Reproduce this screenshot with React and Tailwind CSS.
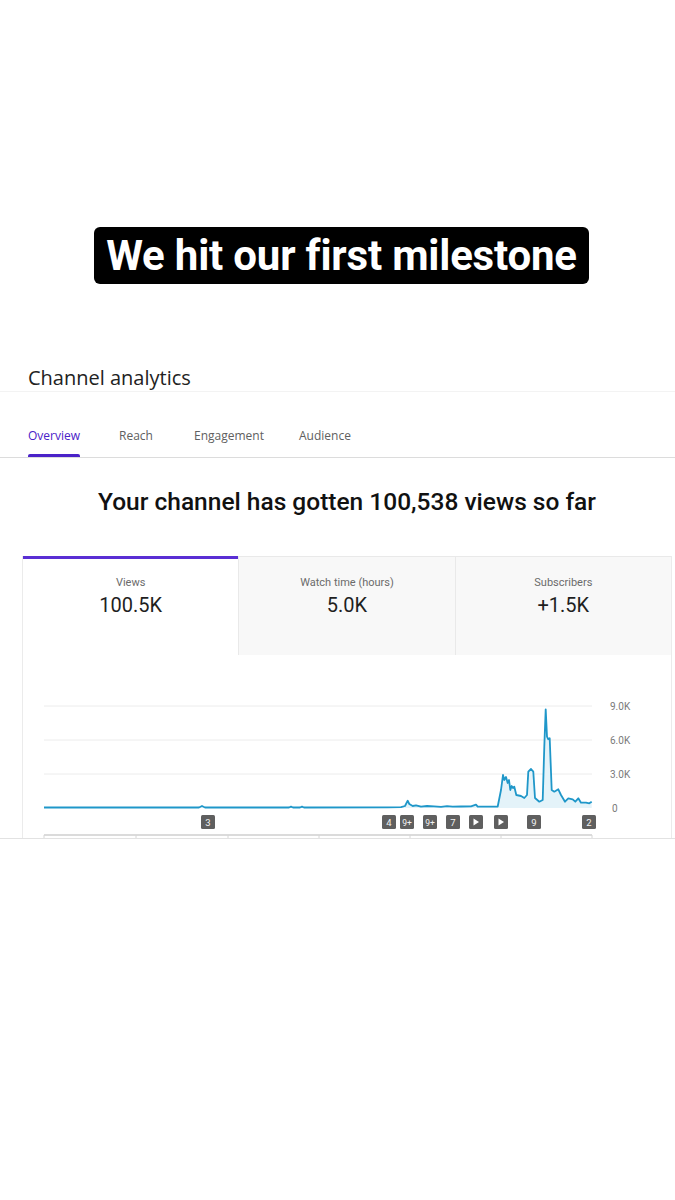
import React from "react";

const linePts = [
  [43, 807.5], [198, 807.5], [201, 806], [204, 807.5], [288, 807.5], [290, 806.6], [292, 807.5], [299, 807.5], [301, 806.6], [303, 807.5],
  [386.7, 807.3], [400, 807.2], [404, 806], [406.7, 800.7], [408.3, 804], [411.7, 806], [415, 805.3], [420, 806.7],
  [426, 806], [433, 806.3], [440, 806.8], [446, 806.2], [451.7, 806.7], [460, 806.5], [470, 806.4], [475, 804.7], [476.7, 806.7],
  [490, 806.7], [496.7, 806.5], [500, 790], [502, 775], [503.3, 780], [505, 777], [506.7, 783], [508, 780], [509.3, 790],
  [510.7, 786], [512, 788], [513.3, 786.7], [515.3, 795], [520, 796], [523.3, 798], [526, 795], [527.3, 771.7], [530, 769],
  [532.3, 771.7], [534, 798], [538.3, 801.7], [541.7, 800], [543.3, 746.7], [544.7, 709.3], [546, 736.7], [547.3, 739.3],
  [548.7, 738.3], [550.7, 790], [553.3, 791.7], [557.3, 789.3], [560, 795], [564, 801.7], [567.3, 798.3], [571.7, 799.3],
  [574.3, 801.7], [577.3, 798.3], [580, 802.7], [585, 802.7], [588.3, 803.3], [590.7, 801.7],
];

const lineD = linePts.map((p, i) => (i ? "L" : "M") + p[0] + " " + p[1]).join(" ");
const fillD = lineD + " L590.7 808 L43 808 Z";

const markers = [
  { x: 200, t: "3" },
  { x: 381, t: "4" },
  { x: 399, t: "9+" },
  { x: 422, t: "9+" },
  { x: 445, t: "7" },
  { x: 468, t: "play" },
  { x: 493, t: "play" },
  { x: 526, t: "9" },
  { x: 581, t: "2" },
];

function Chart() {
  return (
    <svg width="650" height="183" viewBox="22 655 650 183" className="block">
      {[706, 740, 774].map((y) => (
        <line key={y} x1="43" x2="591" y1={y} y2={y} stroke="#ececec" strokeWidth="1" />
      ))}
      <path d={fillD} fill="#e4f3f9" />
      <path d={lineD} fill="none" stroke="#1f97c9" strokeWidth="1.8" strokeLinejoin="round" />
      {[
        ["9.0K", 706],
        ["6.0K", 740],
        ["3.0K", 774],
        ["0", 808],
      ].map(([t, y]) => (
        <text key={t} x={t === "0" ? 611 : 609} y={y + 3.5} fontSize="10" fill="#7a7a7a" fontFamily="Roboto, sans-serif">
          {t}
        </text>
      ))}
      {markers.map((m, i) => (
        <g key={i}>
          <rect x={m.x} y="815" width="14" height="14" rx="1.5" fill="#5f5f5f" />
          {m.t === "play" ? (
            <path d={`M${m.x + 4.5} ${818.5} L${m.x + 10} ${822} L${m.x + 4.5} ${825.5} Z`} fill="#fff" />
          ) : (
            <text
              x={m.x + 7}
              y="825.5"
              fontSize={m.t.length > 1 ? "8.5" : "9.5"}
              fill="#f2f2f2"
              textAnchor="middle"
              fontFamily="Roboto, sans-serif"
            >
              {m.t}
            </text>
          )}
        </g>
      ))}
      <line x1="43" x2="591" y1="835" y2="835" stroke="#cfcfcf" strokeWidth="1.5" />
      {[43, 135, 227, 318, 409, 500, 591].map((x) => (
        <line key={x} x1={x} x2={x} y1="835" y2="838" stroke="#d6d6d6" strokeWidth="1" />
      ))}
    </svg>
  );
}

function Stat({ label, value, active }) {
  return (
    <div
      className={
        "flex-1 h-[99px] flex flex-col items-center font-['Roboto',sans-serif] " +
        (active ? "bg-white border-t-[3px] border-[#5a2fd4] pt-[17px]" : "bg-[#f8f8f8] border-t border-l border-[#e9e9e9] pt-[19px]")
      }
    >
      <div className="text-[11px] leading-[14px] text-[#6b6b6b]">{label}</div>
      <div className="text-[20px] leading-[24px] text-[#1f1f1f] mt-[3px]">{value}</div>
    </div>
  );
}

export default function App() {
  return (
    <div className="w-[675px] h-[1200px] bg-white overflow-hidden">
      <div className="pt-[227px] pl-[8px] flex justify-center">
        <div className="bg-black rounded-[6px] h-[57px] px-[12px] flex items-center">
          <span className="text-white font-bold text-[42px] leading-none font-['Roboto',sans-serif] tracking-[-0.2px]">
            We hit our first milestone
          </span>
        </div>
      </div>

      <div className="mt-[80px] h-[28px] border-b border-[#f3f3f3] pl-[28px]">
        <div className="text-[20px] leading-[28px] text-[#222] font-['Open_Sans',sans-serif]">Channel analytics</div>
      </div>

      <div className="flex pl-[28px] pt-[36px] border-b border-[#dcdcdc] font-['Open_Sans',sans-serif] text-[12px]">
        <div className="w-[91px]">
          <div className="w-fit flex flex-col">
            <div className="leading-[16px] text-[#4a22c8] font-medium">Overview</div>
            <div className="mt-[10px] h-[3px] rounded-t-[2px] bg-[#4a22c8]" />
          </div>
        </div>
        <div className="w-[75px] leading-[16px] text-[#606060]">Reach</div>
        <div className="w-[105px] leading-[16px] text-[#606060]">Engagement</div>
        <div className="leading-[16px] text-[#606060]">Audience</div>
      </div>

      <div className="mt-[30px] ml-[22px] w-[650px] text-center text-[24.5px] leading-[28px] font-medium text-[#111] font-['Roboto',sans-serif]">
        Your channel has gotten 100,538 views so far
      </div>

      <div className="mt-[40px] ml-[22px] w-[650px] border-l border-r border-[#ebebeb]">
        <div className="flex">
          <Stat label="Views" value="100.5K" active />
          <Stat label="Watch time (hours)" value="5.0K" />
          <Stat label="Subscribers" value="+1.5K" />
        </div>
        <Chart />
      </div>
      <div className="h-px bg-[#e2e2e2]" />
    </div>
  );
}
